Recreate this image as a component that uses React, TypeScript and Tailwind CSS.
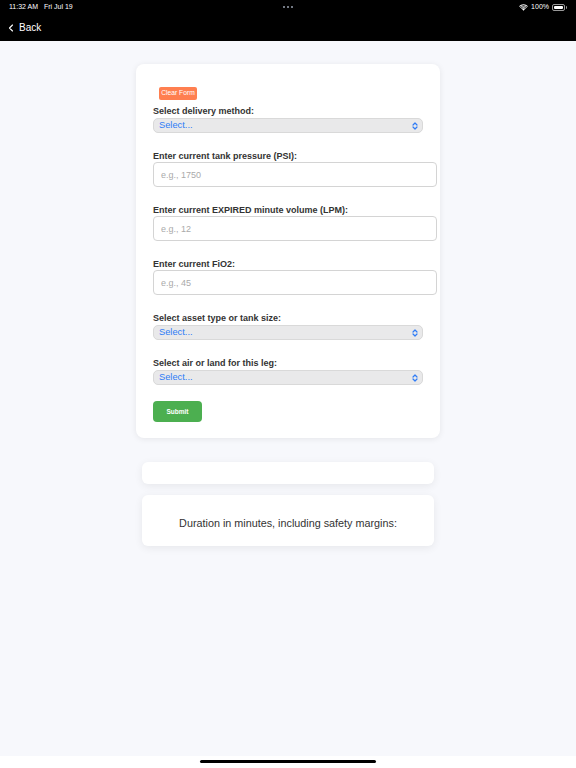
import { ChevronLeft } from "lucide-react";

const font = { fontFamily: '"Liberation Sans", Arial, sans-serif' };

function StatusBar() {
  return (
    <div className="flex h-[14px] items-center justify-between px-[9px] text-[7px] font-medium text-white">
      <span className="w-[120px]">11:32 AM&nbsp;&nbsp;&nbsp;Fri Jul 19</span>
      <span className="flex gap-[2px]">
        <span className="h-[2px] w-[2px] rounded-full bg-gray-400" />
        <span className="h-[2px] w-[2px] rounded-full bg-gray-400" />
        <span className="h-[2px] w-[2px] rounded-full bg-gray-400" />
      </span>
      <span className="flex w-[120px] items-center justify-end gap-[3px]">
        <svg width="9" height="7" viewBox="0 0 18 14" fill="white">
          <path d="M9 13.5 6.2 10.6a4 4 0 0 1 5.6 0z" />
          <path d="M4.3 8.7a6.6 6.6 0 0 1 9.4 0l-1.3 1.3a4.8 4.8 0 0 0-6.8 0z" />
          <path d="M2.2 6.6a9.6 9.6 0 0 1 13.6 0l-1.3 1.3a7.8 7.8 0 0 0-11 0z" />
          <path d="M0 4.4a12.7 12.7 0 0 1 18 0l-1.3 1.3a10.9 10.9 0 0 0-15.4 0z" />
        </svg>
        <span>100%</span>
        <span className="flex items-center">
          <span className="flex h-[7px] w-[13px] items-center rounded-[2px] border border-white/60 p-px">
            <span className="h-full w-full rounded-[1px] bg-white" />
          </span>
          <span className="ml-px h-[3px] w-px rounded-r bg-white/60" />
        </span>
      </span>
    </div>
  );
}

function Label({ children }: { children: string }) {
  return <p className="text-[9px] font-bold leading-[12px] text-[#333]">{children}</p>;
}

function SelectField({ label }: { label: string }) {
  return (
    <div>
      <Label>{label}</Label>
      <div className="mt-px flex h-[15px] w-[270px] items-center justify-between rounded-[5px] border border-[#d9d9d9] bg-[#e9e9ea] pl-[5px] pr-[4px]">
        <span className="text-[9.3px] leading-none text-[#2f7cf6]">Select...</span>
        <svg width="6" height="8" viewBox="0 0 6 8" fill="none" stroke="#2f7cf6" strokeWidth="1.2" strokeLinecap="round" strokeLinejoin="round">
          <path d="M1 3 3 1l2 2" />
          <path d="M1 5l2 2 2-2" />
        </svg>
      </div>
    </div>
  );
}

function InputField({ label, placeholder }: { label: string; placeholder: string }) {
  return (
    <div>
      <Label>{label}</Label>
      <input
        className="block h-[25px] w-[284px] rounded-[4px] border border-[#d4d4d4] bg-white px-[7px] text-[9px] text-[#333] outline-none placeholder:text-[#aaa]"
        placeholder={placeholder}
        style={font}
      />
    </div>
  );
}

export default function App() {
  return (
    <div className="flex h-[768px] w-[576px] flex-col bg-[#f7f8fc]" style={font}>
      <header className="h-[41px] bg-black">
        <StatusBar />
        <div className="flex h-[27px] items-center pl-[5px] text-white">
          <ChevronLeft className="h-[14px] w-[12px]" strokeWidth={2.2} />
          <span className="ml-[2px] text-[10px]">Back</span>
        </div>
      </header>

      <main className="flex flex-1 flex-col items-center">
        <div className="mt-[23px] w-[304px] rounded-[8px] bg-white px-[17px] pb-[16px] pt-[23px] shadow-[0_1px_6px_rgba(0,0,0,0.08)]">
          <button className="ml-[6px] flex h-[13px] w-[38px] items-center justify-center rounded-[2px] bg-[#ff7f50] text-[6.7px] text-white">
            Clear Form
          </button>
          <div className="mt-[5px] flex flex-col gap-[17px]">
            <SelectField label="Select delivery method:" />
            <InputField label="Enter current tank pressure (PSI):" placeholder="e.g., 1750" />
            <InputField label="Enter current EXPIRED minute volume (LPM):" placeholder="e.g., 12" />
            <InputField label="Enter current FiO2:" placeholder="e.g., 45" />
            <SelectField label="Select asset type or tank size:" />
            <SelectField label="Select air or land for this leg:" />
          </div>
          <button className="mt-[16px] flex h-[21px] w-[49px] items-center justify-center rounded-[4px] bg-[#4caf50] text-[6.5px] font-bold text-white">
            Submit
          </button>
        </div>

        <div className="mt-[24px] h-[22px] w-[292px] rounded-[6px] bg-white shadow-[0_2px_8px_rgba(0,0,0,0.07)]" />

        <div className="mt-[11px] flex h-[51px] w-[292px] items-center justify-center rounded-[6px] bg-white pt-[6px] shadow-[0_2px_8px_rgba(0,0,0,0.07)]">
          <span className="text-[10.8px] text-[#333]">Duration in minutes, including safety margins:</span>
        </div>
      </main>

      <footer className="flex h-[12px] items-start justify-center bg-white pt-[4px]">
        <span className="h-[3px] w-[176px] rounded-full bg-black" />
      </footer>
    </div>
  );
}
